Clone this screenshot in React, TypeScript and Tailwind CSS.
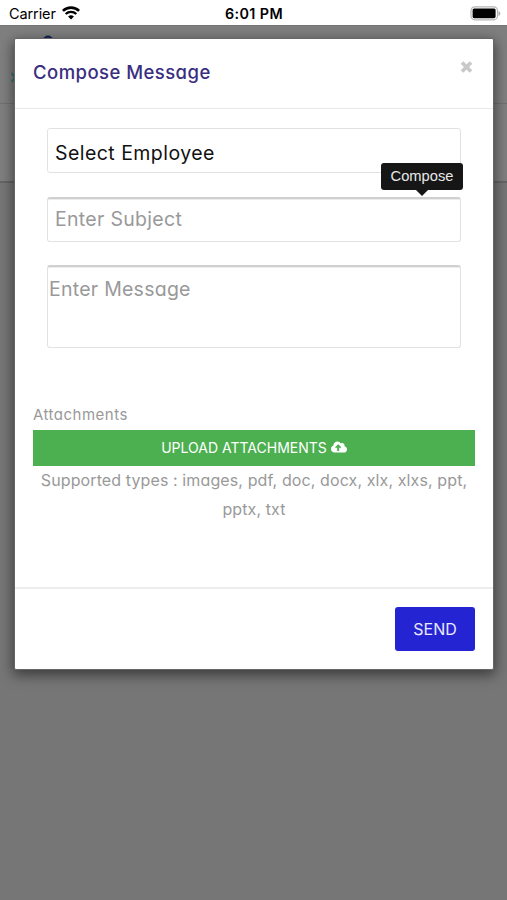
import type { ReactNode } from 'react'
import { FaCloudUploadAlt } from 'react-icons/fa'

function StatusBar() {
  return (
    <header className="relative flex h-[25px] items-center justify-between bg-white pr-[6px] pl-[9px] font-['Inter',sans-serif] text-black">
      <div className="flex items-center gap-[6px]">
        <span className="text-[14.5px] leading-[25px] tracking-[-0.1px] whitespace-nowrap pt-[2px]">Carrier</span>
        <svg width="18" height="14" viewBox="0 0 18 14" fill="none" stroke="currentColor" className="mt-px">
          <path d="M0.9 4.9a11.6 11.6 0 0 1 16.2 0" strokeWidth="2.6" />
          <path d="M3.7 8a7.6 7.6 0 0 1 10.6 0" strokeWidth="2.4" />
          <path d="M9 13.5 6.1 10.6a4.1 4.1 0 0 1 5.800 0z" fill="currentColor" stroke="none" />
        </svg>
      </div>
      <span className="absolute left-[225px] top-[2px] text-[14.3px] font-semibold leading-[24px] tracking-[0.4px] whitespace-nowrap">
        6:01 PM
      </span>
      <svg width="31" height="15" viewBox="0 0 31 15" className="mt-px">
        <rect x="1" y="0.8" width="26.5" height="13" rx="3.8" fill="#fff" stroke="#b5b5b5" strokeWidth="1.2" />
        <rect x="2.6" y="2.4" width="23" height="9.8" rx="1.6" fill="#000" />
        <path d="M28.5 5v5c1.2-.5 1.8-1.4 1.8-2.5S29.7 5.5 28.5 5z" fill="#adadad" />
      </svg>
    </header>
  )
}

// Page underneath the modal, already dimmed by the backdrop.
function DimmedPage() {
  return (
    <div className="relative flex h-[875px] flex-col bg-[#767676]">
      <div className="relative h-[79px] border-t border-b border-t-[#757575] border-b-[#707070] bg-[#7f7f7f]">
        <svg width="14" height="8" viewBox="0 0 14 8" className="absolute left-[41px] top-[8px]">
          <path d="M1 5 5.500 1.500h3L13 5v3H1z" fill="#172354" />
          <path d="M4 5 7 3.500l3 1.500v1H4z" fill="#367a8c" />
        </svg>
        <svg width="4" height="11" viewBox="0 0 4 11" className="absolute left-[11px] top-[46px]" fill="none">
          <path d="M0.500 1 4 5.500 0.500 10" stroke="#2b7570" strokeWidth="1.800" />
        </svg>
      </div>
      <div className="h-[79px] border-b-2 border-[#656565] bg-[#7f7f7f]" />
    </div>
  )
}

function Tooltip({ children }: { children: ReactNode }) {
  return (
    <div className="absolute left-[366px] top-[35px] flex flex-col items-center">
      <div className="h-[27px] w-[82px] rounded-[3px] bg-[#161616] text-center font-['Liberation_Sans',sans-serif] text-[14.7px] leading-[27px] text-[#e8e8e8]">
        {children}
      </div>
      <div className="size-0 border-x-[6px] border-t-[6px] border-x-transparent border-t-[#161616]" />
    </div>
  )
}

export default function App() {
  return (
    <div className="relative h-[900px] w-[507px] overflow-hidden">
      <StatusBar />
      <DimmedPage />

      <div className="absolute left-[14px] top-[38px] flex h-[632px] w-[480px] flex-col rounded-[2px] border border-[#666] bg-white font-['Inter',sans-serif] shadow-[0_4px_13px_1px_rgba(0,0,0,0.5)] [font-feature-settings:'cv11']">
        <div className="flex h-[70px] justify-between border-b border-[#e8e8e8] pr-[20px] pl-[18px]">
          <h1 className="mt-[18px] text-[18.5px] font-medium leading-[30px] tracking-[0.45px] whitespace-nowrap text-[#3a2e80]">
            Compose Message
          </h1>
          <svg width="13" height="12" viewBox="0 0 13 12" className="mt-[22px]" fill="none" stroke="#c8c8c8">
            <path d="M2 1.5 11 10.5M11 1.5 2 10.5" strokeWidth="3.7" />
          </svg>
        </div>

        <div className="relative mt-[19px] flex flex-col px-[32px]">
          <div className="h-[45px] rounded-[3px] border border-[#e2e2e2] pl-[7px] text-[19.5px] leading-[48px] tracking-[0.45px] whitespace-nowrap text-[#111]">
            Select Employee
          </div>
          <div className="mt-[24px] h-[45px] rounded-[3px] border border-t-[2px] border-[#e2e2e2] border-t-[#d0d0d0] pl-[7px] text-[19.5px] leading-[40px] tracking-[0.3px] whitespace-nowrap text-[#999] shadow-[inset_0_1px_0_#ececec]">
            Enter Subject
          </div>
          <div className="mt-[23px] h-[83px] rounded-[3px] border border-t-[2px] border-[#e2e2e2] border-t-[#d0d0d0] pl-px text-[19.5px] leading-[44px] tracking-[0.25px] whitespace-nowrap text-[#999] shadow-[inset_0_1px_0_#ececec]">
            Enter Message
          </div>
          <Tooltip>Compose</Tooltip>
        </div>

        <div className="mt-[54px] px-[18px]">
          <div className="h-[28px] text-[15px] leading-[26px] tracking-[0.5px] whitespace-nowrap text-[#999]">
            <span>Attachments</span>
          </div>
          <button className="flex h-[36px] w-full items-center justify-center gap-[4px] bg-[#4caf50] pb-[2px] text-[14px] text-white">
            <span className="whitespace-nowrap tracking-[0px]">UPLOAD ATTACHMENTS</span>
            <FaCloudUploadAlt size={16} />
          </button>
          <div className="text-center text-[16px] leading-[29px] whitespace-nowrap text-[#999]">
            <p className="tracking-[0.11px]">Supported types : images, pdf, doc, docx, xlx, xlxs, ppt,</p>
            <p className="tracking-[0.1px]">pptx, txt</p>
          </div>
        </div>

        <div className="mt-auto flex h-[82px] justify-end border-t-2 border-[#ececec] pt-[18px] pr-[18px]">
          <button className="h-[44px] w-[80px] rounded-[3px] bg-[#2424d2] text-center text-[16px] leading-[44px] tracking-[0px] text-[#e9e9ff]">
            SEND
          </button>
        </div>
      </div>
    </div>
  )
}
